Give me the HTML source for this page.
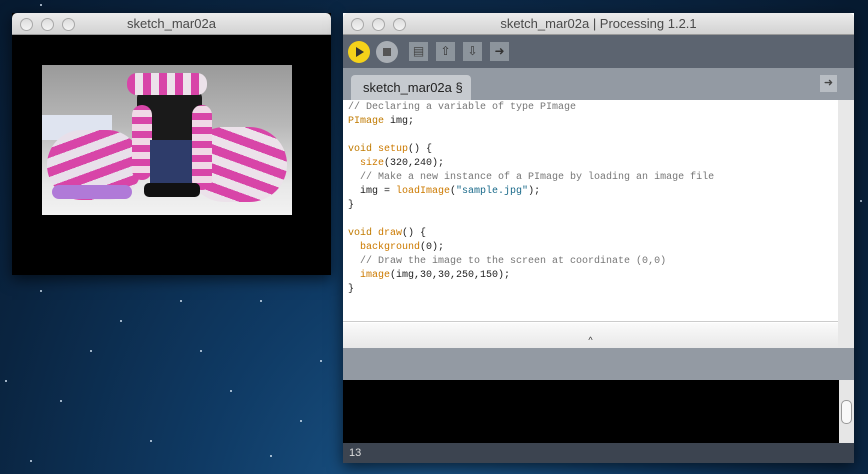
<!DOCTYPE html>
<html><head><style>
*{margin:0;padding:0;box-sizing:border-box}
body{width:868px;height:474px;overflow:hidden;position:relative;font-family:"Liberation Sans",sans-serif;
background:radial-gradient(ellipse at 50% 120%,#1d5a8e 0%,#0f3a64 40%,#0a2440 75%,#071a30 100%);}
.star{position:absolute;width:2px;height:2px;background:#cfe0f0;border-radius:1px}
.win{position:absolute;box-shadow:0 4px 14px rgba(0,0,0,.6)}
.tb{height:22px;background:linear-gradient(#ececec,#d2d2d2);border-radius:5px 5px 0 0;text-align:center;font-size:13px;color:#4a4a4a;line-height:22px;position:relative;border-bottom:1px solid #999}
.btn{position:absolute;top:5px;width:13px;height:13px;border-radius:50%;background:linear-gradient(#dcdcdc,#f4f4f4);border:1px solid #a8a8a8}
.code{position:absolute;font-family:"Liberation Mono",monospace;font-size:10px;line-height:14px;white-space:pre;color:#222}
.c{color:#777}.k{color:#c07a00}.f{color:#cc7a00}.s{color:#1a6a8a}
.tool{position:absolute;top:42px;width:19px;height:19px;background:#8c949c}
</style></head><body>
<div class="star" style="left:40px;top:290px"></div><div class="star" style="left:120px;top:320px"></div>
<div class="star" style="left:200px;top:350px"></div><div class="star" style="left:60px;top:400px"></div>
<div class="star" style="left:260px;top:300px"></div><div class="star" style="left:300px;top:420px"></div>
<div class="star" style="left:150px;top:440px"></div><div class="star" style="left:30px;top:460px"></div>
<div class="star" style="left:230px;top:390px"></div><div class="star" style="left:90px;top:350px"></div>
<div class="star" style="left:180px;top:300px"></div><div class="star" style="left:320px;top:360px"></div>
<div class="star" style="left:5px;top:380px"></div><div class="star" style="left:270px;top:455px"></div>
<div class="star" style="left:860px;top:200px"></div><div class="star" style="left:40px;top:4px"></div>

<div class="win" style="left:12px;top:13px;width:319px;height:262px;background:#000">
 <div class="tb">sketch_mar02a
  <div class="btn" style="left:8px"></div><div class="btn" style="left:29px"></div><div class="btn" style="left:50px"></div></div>
 <div style="position:absolute;left:30px;top:52px;width:250px;height:150px;overflow:hidden;background:linear-gradient(#9a9a9a,#b8b8b8 40%,#e8e8e8 80%,#f2f2f2)">
  <div style="position:absolute;left:0;top:50px;width:70px;height:25px;background:#dfe4f0"></div>
  <div style="position:absolute;left:5px;top:65px;width:95px;height:70px;border-radius:40px;background:repeating-linear-gradient(160deg,#d845a8 0 9px,#e8e0ea 9px 18px)"></div>
  <div style="position:absolute;left:145px;top:62px;width:100px;height:75px;border-radius:40px;background:repeating-linear-gradient(20deg,#d845a8 0 9px,#ece2ea 9px 18px)"></div>
  <div style="position:absolute;left:95px;top:25px;width:65px;height:55px;background:#1a1a1a;border-radius:8px"></div>
  <div style="position:absolute;left:85px;top:8px;width:80px;height:22px;border-radius:10px;background:repeating-linear-gradient(90deg,#d845a8 0 8px,#ece2ea 8px 16px)"></div>
  <div style="position:absolute;left:90px;top:40px;width:20px;height:75px;border-radius:10px;background:repeating-linear-gradient(0deg,#d845a8 0 7px,#f0d8e6 7px 14px)"></div>
  <div style="position:absolute;left:150px;top:40px;width:20px;height:85px;border-radius:10px;background:repeating-linear-gradient(0deg,#d845a8 0 7px,#f0d8e6 7px 14px)"></div>
  <div style="position:absolute;left:108px;top:75px;width:42px;height:45px;background:#2e3c6a"></div>
  <div style="position:absolute;left:102px;top:118px;width:56px;height:14px;background:#111;border-radius:5px"></div>
  <div style="position:absolute;left:10px;top:120px;width:80px;height:14px;border-radius:7px;background:#b07ad8"></div>
 </div>
</div>

<div class="win" style="left:343px;top:13px;width:511px;height:450px;background:#fff">
 <div class="tb">sketch_mar02a | Processing 1.2.1
  <div class="btn" style="left:8px"></div><div class="btn" style="left:29px"></div><div class="btn" style="left:50px"></div></div>
 <div style="position:absolute;top:22px;left:0;width:511px;height:33px;background:#5c6470"></div>
 <div style="position:absolute;left:5px;top:28px;width:22px;height:22px;border-radius:50%;background:#f5d21a"><div style="position:absolute;left:8px;top:6px;border-left:8px solid #333;border-top:5px solid transparent;border-bottom:5px solid transparent"></div></div>
 <div style="position:absolute;left:33px;top:28px;width:22px;height:22px;border-radius:50%;background:#a9aeb4"><div style="position:absolute;left:7px;top:7px;width:8px;height:8px;background:#555"></div></div>
 <div class="tool" style="left:66px;top:29px;color:#444;font-size:12px;text-align:center;line-height:19px">▤</div>
 <div class="tool" style="left:93px;top:29px;color:#333;font-size:12px;text-align:center;line-height:19px">⇧</div>
 <div class="tool" style="left:120px;top:29px;color:#333;font-size:12px;text-align:center;line-height:19px">⇩</div>
 <div class="tool" style="left:147px;top:29px;color:#333;font-size:12px;text-align:center;line-height:19px">➜</div>
 <div style="position:absolute;top:55px;left:0;width:511px;height:32px;background:#939aa3"></div>
 <div style="position:absolute;top:62px;left:8px;width:120px;height:25px;background:#c6cacf;border-radius:4px 4px 0 0;font-size:13px;color:#222;line-height:25px;padding-left:12px">sketch_mar02a §</div>
 <div style="position:absolute;top:62px;left:477px;width:17px;height:17px;background:#b8bdc3;color:#444;font-size:11px;text-align:center;line-height:17px">➜</div>
 <div style="position:absolute;top:87px;left:495px;width:16px;height:248px;background:#e8e8e8"></div>
 <div style="position:absolute;top:87px;left:0;width:495px;height:222px;background:#fff;border-bottom:1px solid #ccc"></div>
 <div class="code" style="left:5px;top:88px"><span class="c">// Declaring a variable of type PImage</span>
<span class="k">PImage</span> img;

<span class="k">void</span> <span class="f">setup</span>() {
  <span class="f">size</span>(320,240);
  <span class="c">// Make a new instance of a PImage by loading an image file</span>
  img = <span class="f">loadImage</span>(<span class="s">"sample.jpg"</span>);
}

<span class="k">void</span> <span class="f">draw</span>() {
  <span class="f">background</span>(0);
  <span class="c">// Draw the image to the screen at coordinate (0,0)</span>
  <span class="f">image</span>(img,30,30,250,150);
}</div>
 <div style="position:absolute;top:310px;left:0;width:495px;height:25px;background:linear-gradient(#fafafa,#e8e8e8);text-align:center;font-size:9px;color:#333;line-height:35px">^</div>
 <div style="position:absolute;top:335px;left:0;width:511px;height:32px;background:#939aa3"></div>
 <div style="position:absolute;top:367px;left:0;width:496px;height:63px;background:#000"></div>
 <div style="position:absolute;top:367px;left:496px;width:15px;height:63px;background:#e6e6e6"><div style="position:absolute;left:2px;top:20px;width:11px;height:24px;border:1px solid #999;border-radius:5px;background:#f8f8f8"></div></div>
 <div style="position:absolute;top:430px;left:0;width:511px;height:20px;background:#3c4450;color:#ddd;font-size:11px;line-height:20px;padding-left:6px">13</div>
</div>
</body></html>
